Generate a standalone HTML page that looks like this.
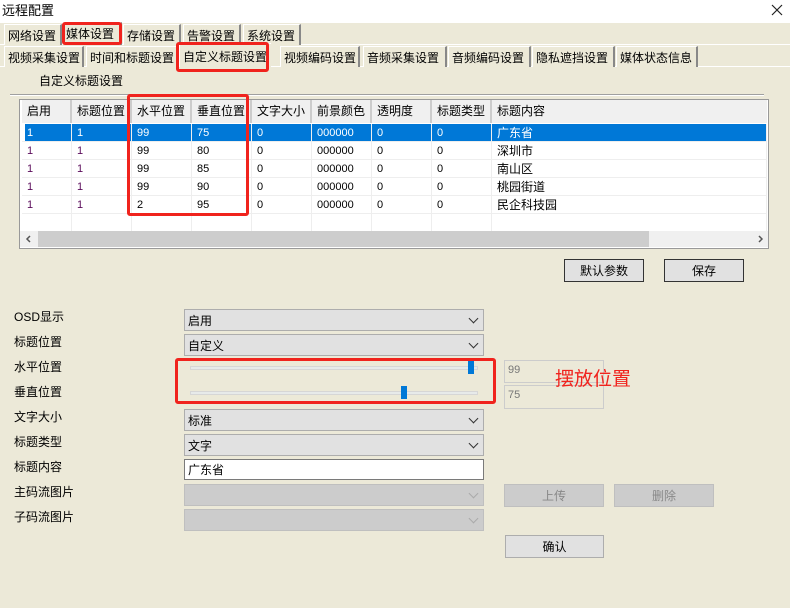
<!DOCTYPE html>
<html><head><meta charset="utf-8"><style>
*{margin:0;padding:0;box-sizing:border-box}
body{width:790px;height:608px;background:#ece9d8;position:relative;overflow:hidden;font-family:"Liberation Sans","Noto Sans CJK SC","WenQuanYi Zen Hei",sans-serif;font-size:12px;color:#000}
.a{position:absolute}
.tab{position:absolute;height:21px;border:1px solid #fff;border-bottom:none;border-right:2px solid #888;padding:4px 0 0 3px;font-size:12px;line-height:14px;white-space:nowrap;background:#ece9d8}
.red{position:absolute;border:3px solid #f0231d;border-radius:3px}
.hd{position:absolute;top:100px;height:23px;border-right:2px solid #ccc;padding:4px 0 0 5px;background:#f0f0f0;font-size:12px;line-height:14px}
.cell{position:absolute;height:18px;padding:3px 0 0 5px;font-size:11px;line-height:13px;border-right:1px solid #eee;border-bottom:1px solid #eee}
.combo{position:absolute;left:184px;width:300px;height:22px;background:#e1e1e1;border:1px solid #adadad;padding:4px 0 0 3px;line-height:14px}
.combo:after{content:"";position:absolute;right:6px;top:5px;width:6px;height:6px;border-right:1px solid #333;border-bottom:1px solid #333;transform:rotate(45deg)}
.dis{background:#cccccc;border-color:#bfbfbf}
.dis:after{border-color:#aaa}
.lbl{position:absolute;left:14px;font-size:12px;line-height:14px}
.btn{position:absolute;height:23px;border:1px solid #adadad;background:#e1e1e1;text-align:center;padding-top:4px;line-height:14px}
</style></head><body>
<div class="a" style="left:0;top:0;width:790px;height:23px;background:#fff"></div>
<div class="a" style="left:2px;top:3px;font-size:13px;line-height:15px">远程配置</div>
<svg class="a" style="left:771px;top:4px" width="12" height="12"><path d="M1 1L11 11M11 1L1 11" stroke="#222" stroke-width="1.2"/></svg>
<div class="a" style="left:0;top:44px;width:790px;height:1px;background:#fff"></div>
<div class="tab" style="left:4px;top:24px;width:58px">网络设置</div>
<div class="tab" style="left:62px;top:22px;width:60px;height:23px">媒体设置</div>
<div class="tab" style="left:123px;top:24px;width:58px">存储设置</div>
<div class="tab" style="left:183px;top:24px;width:58px">告警设置</div>
<div class="tab" style="left:243px;top:24px;width:58px">系统设置</div>
<div class="a" style="left:0;top:66px;width:790px;height:1px;background:#fff"></div>
<div class="tab" style="left:4px;top:46px;width:80px">视频采集设置</div>
<div class="tab" style="left:86px;top:46px;width:92px">时间和标题设置</div>
<div class="tab" style="left:179px;top:43px;width:92px;height:24px;border-right:none;padding-top:6px">自定义标题设置</div>
<div class="tab" style="left:280px;top:46px;width:80px">视频编码设置</div>
<div class="tab" style="left:363px;top:46px;width:84px">音频采集设置</div>
<div class="tab" style="left:448px;top:46px;width:83px">音频编码设置</div>
<div class="tab" style="left:532px;top:46px;width:83px">隐私遮挡设置</div>
<div class="tab" style="left:616px;top:46px;width:82px">媒体状态信息</div>
<div class="red" style="left:62px;top:22px;width:60px;height:23px"></div>
<div class="red" style="left:176px;top:42px;width:93px;height:30px"></div>
<div class="a" style="left:39px;top:74px;line-height:14px">自定义标题设置</div>
<div class="a" style="left:10px;top:94px;width:754px;height:1px;background:#a0a0a0"></div>
<div class="a" style="left:10px;top:95px;width:754px;height:1px;background:#fff"></div>
<div class="a" style="left:19px;top:99px;width:750px;height:150px;background:#fff;border:1px solid #999"></div>
<div class="hd" style="left:22px;width:50px">启用</div>
<div class="hd" style="left:72px;width:60px">标题位置</div>
<div class="hd" style="left:132px;width:60px">水平位置</div>
<div class="hd" style="left:192px;width:60px">垂直位置</div>
<div class="hd" style="left:252px;width:60px">文字大小</div>
<div class="hd" style="left:312px;width:60px">前景颜色</div>
<div class="hd" style="left:372px;width:60px">透明度</div>
<div class="hd" style="left:432px;width:60px">标题类型</div>
<div class="hd" style="left:492px;width:275px;border-right:none">标题内容</div>
<div class="a" style="left:25px;top:124px;width:742px;height:18px;background:#0078d7"></div>
<div id="rows"></div>
<div class="a" style="left:20px;top:231px;width:748px;height:16px;background:#f0f0f0"></div>
<div class="a" style="left:38px;top:231px;width:611px;height:16px;background:#cdcdcd"></div>
<svg class="a" style="left:25px;top:235px" width="8" height="8"><path d="M5 1L2 4L5 7" stroke="#555" stroke-width="1.5" fill="none"/></svg>
<svg class="a" style="left:756px;top:235px" width="8" height="8"><path d="M3 1L6 4L3 7" stroke="#555" stroke-width="1.5" fill="none"/></svg>
<div class="red" style="left:127px;top:94px;width:122px;height:122px"></div>
<div class="btn" style="left:564px;top:259px;width:80px;border-color:#333">默认参数</div>
<div class="btn" style="left:664px;top:259px;width:80px;border-color:#333">保存</div>
<div class="lbl" style="top:310px">OSD显示</div>
<div class="lbl" style="top:335px">标题位置</div>
<div class="lbl" style="top:360px">水平位置</div>
<div class="lbl" style="top:385px">垂直位置</div>
<div class="lbl" style="top:410px">文字大小</div>
<div class="lbl" style="top:435px">标题类型</div>
<div class="lbl" style="top:460px">标题内容</div>
<div class="lbl" style="top:485px">主码流图片</div>
<div class="lbl" style="top:510px">子码流图片</div>
<div class="combo" style="top:309px">启用</div>
<div class="combo" style="top:334px">自定义</div>
<div class="combo" style="top:409px">标准</div>
<div class="combo" style="top:434px">文字</div>
<div class="a" style="left:184px;top:459px;width:300px;height:21px;background:#fff;border:1px solid #7a7a7a;padding:3px 0 0 3px;line-height:14px">广东省</div>
<div class="combo dis" style="top:484px"></div>
<div class="combo dis" style="top:509px"></div>
<div class="a" style="left:190px;top:366px;width:288px;height:4px;background:#e7eaea;border:1px solid #d6d6d6"></div>
<div class="a" style="left:190px;top:391px;width:288px;height:4px;background:#e7eaea;border:1px solid #d6d6d6"></div>
<div class="a" style="left:468px;top:361px;width:6px;height:13px;background:#0078d7"></div>
<div class="a" style="left:401px;top:386px;width:6px;height:13px;background:#0078d7"></div>
<div class="red" style="left:175px;top:358px;width:321px;height:46px"></div>
<div class="a" style="left:504px;top:360px;width:100px;height:23px;border:1px solid #ccc;color:#777;padding:3px 0 0 3px;font-size:11px">99</div>
<div class="a" style="left:504px;top:385px;width:100px;height:24px;border:1px solid #ccc;color:#777;padding:3px 0 0 3px;font-size:11px">75</div>
<div class="a" style="left:555px;top:369px;font-size:19px;line-height:22px;color:#f0231d">摆放位置</div>
<div class="btn" style="left:504px;top:484px;width:100px;background:#cccccc;border-color:#bfbfbf;color:#888">上传</div>
<div class="btn" style="left:614px;top:484px;width:100px;background:#cccccc;border-color:#bfbfbf;color:#888">删除</div>
<div class="btn" style="left:505px;top:535px;width:99px">确认</div>
<script>
var d=[["1","1","99","75","0","000000","0","0","广东省"],["1","1","99","80","0","000000","0","0","深圳市"],["1","1","99","85","0","000000","0","0","南山区"],["1","1","99","90","0","000000","0","0","桃园街道"],["1","1","2","95","0","000000","0","0","民企科技园"]];
var xs=[22,72,132,192,252,312,372,432,492,767],h="";
for(var r=0;r<6;r++){for(var c=0;c<9;c++){var t=r<5?d[r][c]:"";var col=r==0?"#fff":(c<2?"#5a0a5a":"#000");
h+='<div class="cell" style="left:'+xs[c]+'px;top:'+(124+r*18)+'px;width:'+(xs[c+1]-xs[c])+'px;color:'+col+';'+(c==8?'font-size:12px;padding-top:2px;line-height:14px':'')+'">'+t+'</div>';}}
document.getElementById("rows").innerHTML=h;
</script>
</body></html>
